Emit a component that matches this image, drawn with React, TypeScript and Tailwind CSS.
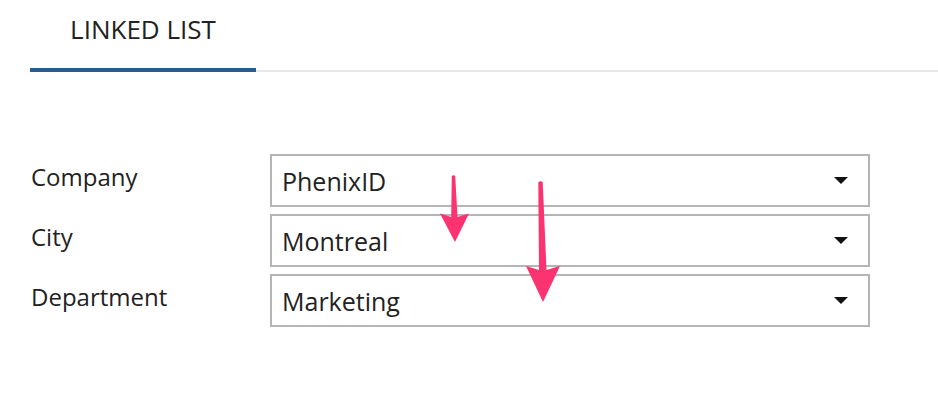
import React from "react";

const Caret = () => (
  <svg width="14" height="8" viewBox="0 0 14 8" className="shrink-0">
    <polygon points="0,0 14,0 7,7" fill="#111" />
  </svg>
);

function Row({ label, value }: { label: string; value: string }) {
  return (
    <div className="flex items-center">
      <div className="w-[270px] pb-[8px] pl-[31px] text-[24px] leading-[30px] text-[#222]">{label}</div>
      <div className="flex h-[53px] w-[600px] items-center justify-between border-2 border-[#b5b5b5] bg-white pl-[10px] pr-[20px] text-[25px] text-[#222]">
        <span className="leading-[30px]">{value}</span>
        <Caret />
      </div>
    </div>
  );
}

export default function App() {
  return (
    <div
      className="relative h-[414px] w-[938px] bg-white"
      style={{ fontFamily: '"Open Sans", sans-serif' }}
    >
      <div className="flex pt-[12px]">
        <div className="ml-[30px] w-[226px] border-b-4 border-[#2b5a8c] pb-[21px] text-center text-[26px] leading-[35px] text-[#222]">
          LINKED LIST
        </div>
        <div className="flex-1 border-b-2 border-[#e8e8e8]" />
      </div>
      <div className="mt-[82px] flex flex-col gap-[7px]">
        <Row label="Company" value="PhenixID" />
        <Row label="City" value="Montreal" />
        <Row label="Department" value="Marketing" />
      </div>
      <svg
        className="pointer-events-none absolute left-0 top-0"
        width="938"
        height="414"
      >
        <path
          d="M451.8,176 Q453.5,174.5 455.2,176 L457.5,217 L469,213.5 L455,242 L440,213.5 L451.2,217 Z"
          fill="#fb3370"
        />
        <path
          d="M538.3,182 Q540.5,180.5 542.7,182 L546.5,270 L560,266 L543,302 L526,266 L539,270 Z"
          fill="#fb3370"
        />
      </svg>
    </div>
  );
}
